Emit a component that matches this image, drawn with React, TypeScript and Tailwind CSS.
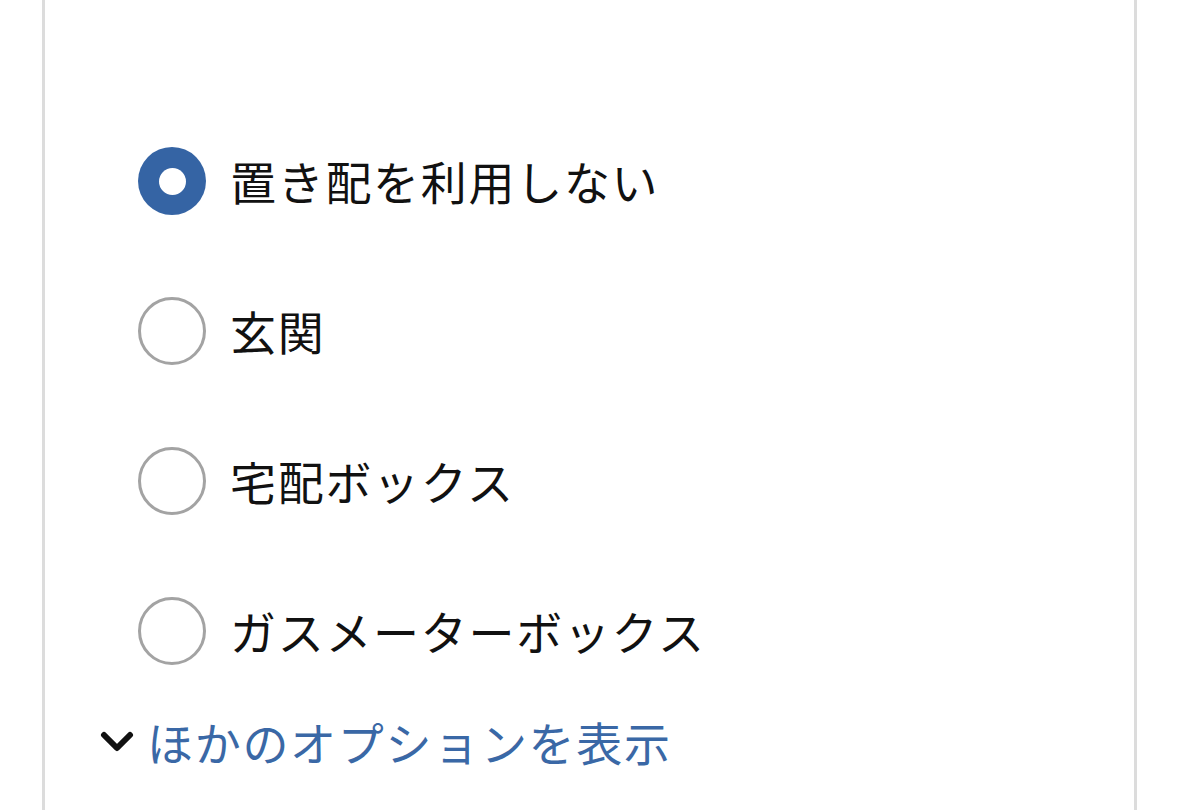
import { useState } from 'react';

const OPTIONS = ['置き配を利用しない', '玄関', '宅配ボックス', 'ガスメーターボックス'];

const FONT = { fontFamily: '"Noto Sans CJK JP", "Noto Sans", sans-serif' };

function Radio({ checked }: { checked: boolean }) {
  if (checked) {
    return (
      <span className="w-[68px] h-[68px] rounded-full bg-[#3564a4] flex items-center justify-center shrink-0">
        <span className="w-[27px] h-[27px] rounded-full bg-white"></span>
      </span>
    );
  }
  return <span className="w-[68px] h-[68px] rounded-full border-[3px] border-[#a3a3a3] bg-white shrink-0"></span>;
}

export default function App() {
  const [selected, setSelected] = useState(0);

  return (
    <div className="w-full h-[810px] bg-white overflow-hidden" style={FONT}>
      <div className="ml-[42px] w-[1095px] h-full border-x-[3px] border-[#dcdcdc] pt-[147px]">
        <div className="flex flex-col gap-[82px] pl-[93px]">
          {OPTIONS.map((label, i) => (
            <button
              key={label}
              onClick={() => setSelected(i)}
              className="flex items-center gap-[24px] h-[68px] text-left"
            >
              <Radio checked={selected === i} />
              <span className="text-[46px] leading-none text-[#111111] tracking-[1.7px] -mt-[3px]">{label}</span>
            </button>
          ))}
        </div>

        <button className="mt-[49px] ml-[55px] flex items-center gap-[13px] h-[56px]">
          <svg width="34" height="22" viewBox="0 0 34 22" fill="none">
            <path d="M4 4 L17 17 L30 4" stroke="#111111" strokeWidth="6" strokeLinecap="round" strokeLinejoin="round" />
          </svg>
          <span className="text-[46px] leading-none text-[#3a68a6] tracking-[1.7px] -mt-[2px]">ほかのオプションを表示</span>
        </button>
      </div>
    </div>
  );
}
